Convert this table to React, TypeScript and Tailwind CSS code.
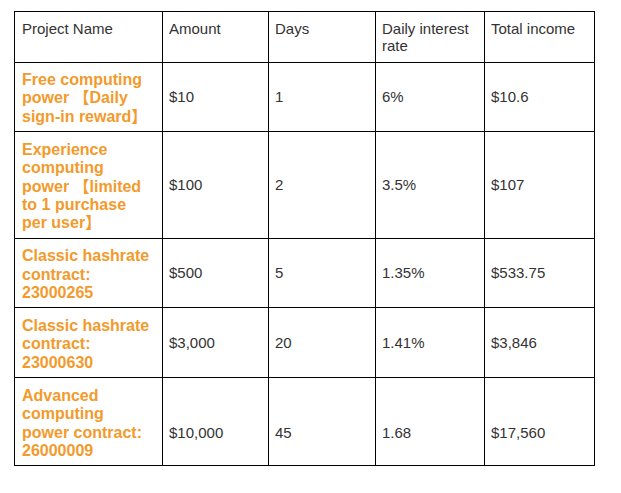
import React from "react";

type Row = { name: string; amount: string; days: string; rate: string; total: string };

const rows: Row[] = [
  { name: "Free computing power 【Daily sign-in reward】", amount: "$10", days: "1", rate: "6%", total: "$10.6" },
  { name: "Experience computing power 【limited to 1 purchase per user】", amount: "$100", days: "2", rate: "3.5%", total: "$107" },
  { name: "Classic hashrate contract: 23000265", amount: "$500", days: "5", rate: "1.35%", total: "$533.75" },
  { name: "Classic hashrate contract: 23000630", amount: "$3,000", days: "20", rate: "1.41%", total: "$3,846" },
  { name: "Advanced computing power contract: 26000009", amount: "$10,000", days: "45", rate: "1.68", total: "$17,560" },
];

const headers = ["Project Name", "Amount", "Days", "Daily interest rate", "Total income"];

export default function App() {
  return (
    <div
      className="w-[621px] h-[493px] bg-white pt-[11px] pl-[14px]"
      style={{ fontFamily: '"Liberation Sans", Arial, "Noto Sans CJK SC", sans-serif' }}
    >
      <table className="border-collapse table-fixed w-[580px] text-[#333333]">
        <colgroup>
          <col className="w-[148px]" />
          <col className="w-[106px]" />
          <col className="w-[107px]" />
          <col className="w-[109px]" />
          <col className="w-[110px]" />
        </colgroup>
        <thead>
          <tr>
            {headers.map((h, i) => (
              <th
                key={h}
                className={
                  i === 0
                    ? "border border-black align-top text-left font-normal text-[15px] leading-[17.25px] pl-[7px] pr-[9px] pt-[8px] pb-[7px]"
                    : "border border-black align-top text-left font-normal text-[15px] leading-[17.25px] pl-[6px] pr-[9px] pt-[8px] pb-[7px]"
                }
              >
                {h}
              </th>
            ))}
          </tr>
        </thead>
        <tbody>
          {rows.map((r, ri) => {
            const last = ri === rows.length - 1;
            return (
              <tr key={r.name}>
                <td className="border border-black align-top text-left font-bold text-[16px] leading-[18.4px] text-[#f39a2c] pl-[7px] pr-[10px] pt-[8.5px] pb-[5px]">
                  {r.name}
                </td>
                {[r.amount, r.days, r.rate, r.total].map((v, i) => (
                  <td
                    key={i}
                    className={
                      last
                        ? "border border-black align-middle text-left text-[15px] leading-[17.25px] pl-[6px] pr-[6px] pt-[28px] pb-[6px]"
                        : "border border-black align-middle text-left text-[15px] leading-[17.25px] pl-[6px] pr-[6px] py-[6px]"
                    }
                  >
                    {v}
                  </td>
                ))}
              </tr>
            );
          })}
        </tbody>
      </table>
    </div>
  );
}
